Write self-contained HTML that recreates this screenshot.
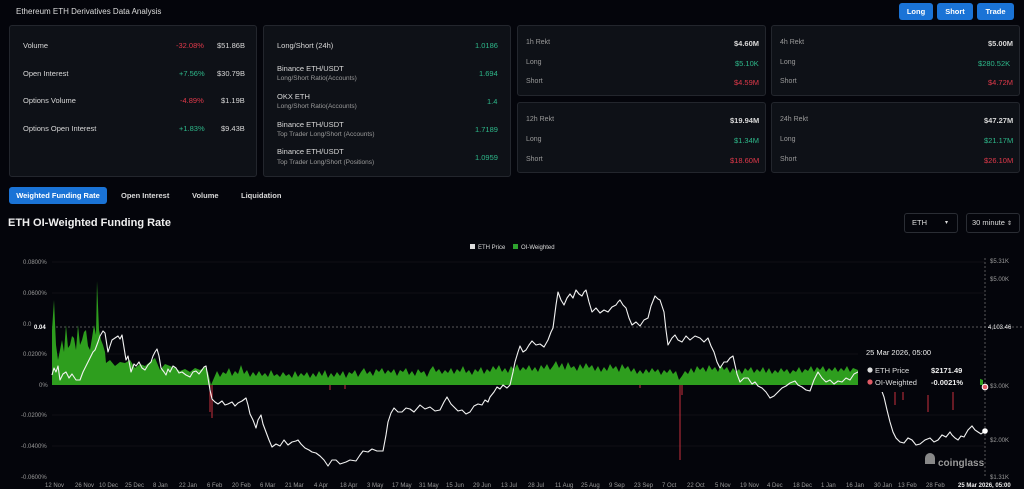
<!DOCTYPE html>
<html><head><meta charset="utf-8">
<style>
*{box-sizing:border-box;margin:0;padding:0}
body{width:1024px;height:489px;background:#04050b;color:#e6e6e6;font-family:"Liberation Sans",sans-serif;overflow:hidden;position:relative}
.a{position:absolute}
.card{position:absolute;background:#0e1117;border:1px solid #23262d;border-radius:3px}
.t{position:absolute;font-size:7.5px;color:#d8d8d8;white-space:nowrap}
.s{font-size:6.5px;color:#9a9a9a}
.g{color:#2eb88a}.r{color:#e0394a}
.b{font-weight:bold}
.btn{position:absolute;top:3px;height:17px;background:#1a73d6;border-radius:3px;color:#fff;font-size:7.5px;font-weight:bold;text-align:center;line-height:17px}
.ax{font-size:6px;fill:#9a9a9a;font-family:"Liberation Sans",sans-serif}
</style></head><body>
<div class="t" style="left:16px;top:7px;font-size:8px;color:#ddd">Ethereum ETH Derivatives Data Analysis</div>
<div class="btn" style="left:899px;width:34px">Long</div>
<div class="btn" style="left:937px;width:36px">Short</div>
<div class="btn" style="left:977px;width:37px">Trade</div>

<div class="card" style="left:9px;top:25px;width:248px;height:152px"></div>
<div class="t" style="left:23px;top:41px">Volume</div><div class="t r" style="left:176px;top:41px">-32.08%</div><div class="t" style="left:217px;top:41px">$51.86B</div>
<div class="t" style="left:23px;top:69px">Open Interest</div><div class="t g" style="left:179px;top:69px">+7.56%</div><div class="t" style="left:217px;top:69px">$30.79B</div>
<div class="t" style="left:23px;top:96px">Options Volume</div><div class="t r" style="left:180px;top:96px">-4.89%</div><div class="t" style="left:221px;top:96px">$1.19B</div>
<div class="t" style="left:23px;top:124px">Options Open Interest</div><div class="t g" style="left:179px;top:124px">+1.83%</div><div class="t" style="left:221px;top:124px">$9.43B</div>

<div class="card" style="left:263px;top:25px;width:248px;height:152px"></div>
<div class="t" style="left:277px;top:41px">Long/Short (24h)</div><div class="t g" style="left:475px;top:41px">1.0186</div>
<div class="t" style="left:277px;top:64px">Binance ETH/USDT</div><div class="t s" style="left:277px;top:75px">Long/Short Ratio(Accounts)</div><div class="t g" style="left:479px;top:69px">1.694</div>
<div class="t" style="left:277px;top:92px">OKX ETH</div><div class="t s" style="left:277px;top:103px">Long/Short Ratio(Accounts)</div><div class="t g" style="left:487px;top:97px">1.4</div>
<div class="t" style="left:277px;top:120px">Binance ETH/USDT</div><div class="t s" style="left:277px;top:131px">Top Trader Long/Short (Accounts)</div><div class="t g" style="left:475px;top:125px">1.7189</div>
<div class="t" style="left:277px;top:147px">Binance ETH/USDT</div><div class="t s" style="left:277px;top:159px">Top Trader Long/Short (Positions)</div><div class="t g" style="left:475px;top:153px">1.0959</div>

<div class="card" style="left:517px;top:25px;width:249px;height:71px"></div>
<div class="t s" style="left:526px;top:39px;font-size:7px">1h Rekt</div><div class="t b" style="left:734px;top:39px">$4.60M</div>
<div class="t s" style="left:526px;top:59px;font-size:7px">Long</div><div class="t g" style="left:735px;top:59px">$5.10K</div>
<div class="t s" style="left:526px;top:78px;font-size:7px">Short</div><div class="t r" style="left:734px;top:78px">$4.59M</div>
<div class="card" style="left:771px;top:25px;width:249px;height:71px"></div>
<div class="t s" style="left:780px;top:39px;font-size:7px">4h Rekt</div><div class="t b" style="left:988px;top:39px">$5.00M</div>
<div class="t s" style="left:780px;top:59px;font-size:7px">Long</div><div class="t g" style="left:978px;top:59px">$280.52K</div>
<div class="t s" style="left:780px;top:78px;font-size:7px">Short</div><div class="t r" style="left:988px;top:78px">$4.72M</div>
<div class="card" style="left:517px;top:102px;width:249px;height:71px"></div>
<div class="t s" style="left:526px;top:116px;font-size:7px">12h Rekt</div><div class="t b" style="left:730px;top:116px">$19.94M</div>
<div class="t s" style="left:526px;top:136px;font-size:7px">Long</div><div class="t g" style="left:734px;top:136px">$1.34M</div>
<div class="t s" style="left:526px;top:156px;font-size:7px">Short</div><div class="t r" style="left:730px;top:156px">$18.60M</div>
<div class="card" style="left:771px;top:102px;width:249px;height:71px"></div>
<div class="t s" style="left:780px;top:116px;font-size:7px">24h Rekt</div><div class="t b" style="left:984px;top:116px">$47.27M</div>
<div class="t s" style="left:780px;top:136px;font-size:7px">Long</div><div class="t g" style="left:984px;top:136px">$21.17M</div>
<div class="t s" style="left:780px;top:156px;font-size:7px">Short</div><div class="t r" style="left:984px;top:156px">$26.10M</div>

<div class="a" style="left:9px;top:187px;width:98px;height:17px;background:#1a73d6;border-radius:3px;color:#fff;font-size:7.5px;font-weight:bold;text-align:center;line-height:17px">Weighted Funding Rate</div>
<div class="t b" style="left:121px;top:191px">Open Interest</div>
<div class="t b" style="left:192px;top:191px">Volume</div>
<div class="t b" style="left:241px;top:191px">Liquidation</div>
<div class="t b" style="left:8px;top:217px;font-size:11px;color:#f0f0f0">ETH OI-Weighted Funding Rate</div>
<div class="a" style="left:904px;top:213px;width:54px;height:20px;border:1px solid #2a2d34;border-radius:3px;font-size:7.5px;color:#ddd;line-height:18px;padding-left:7px">ETH<span style="position:absolute;right:9px;font-size:6px">▾</span></div>
<div class="a" style="left:966px;top:213px;width:54px;height:20px;border:1px solid #2a2d34;border-radius:3px;font-size:7.5px;color:#ddd;line-height:18px;padding-left:5px">30 minute <span style="font-size:6px">⇕</span></div>

<svg class="a" style="left:0;top:240px" width="1024" height="249" viewBox="0 240 1024 249">
<g stroke="#1a1c22" stroke-width="0.6">
<line x1="52" y1="262" x2="985" y2="262"/><line x1="52" y1="293" x2="985" y2="293"/><line x1="52" y1="354" x2="985" y2="354"/><line x1="52" y1="415" x2="985" y2="415"/><line x1="52" y1="446" x2="985" y2="446"/>
</g>
<line x1="52" y1="327" x2="1024" y2="327" stroke="#aaa" stroke-width="0.6" stroke-dasharray="2,2"/>
<line x1="985" y1="258" x2="985" y2="478" stroke="#aaa" stroke-width="0.5" stroke-dasharray="2,2"/>
<text class="ax" x="23" y="264">0.0800%</text><text class="ax" x="23" y="295">0.0600%</text><text class="ax" x="23" y="326">0.0</text><text class="ax" x="23" y="356">0.0200%</text><text class="ax" x="39" y="387">0%</text><text class="ax" x="21" y="417">-0.0200%</text><text class="ax" x="21" y="448">-0.0400%</text><text class="ax" x="21" y="479">-0.0600%</text>
<text x="34" y="329" style="font-size:6px;fill:#fff;font-weight:bold;font-family:'Liberation Sans'">0.04</text>
<text class="ax" x="990" y="263">$5.31K</text><text class="ax" x="990" y="281">$5.00K</text><text x="988" y="329" style="font-size:6px;fill:#eee;font-family:'Liberation Sans'">4,103.46</text><text class="ax" x="990" y="388">$3.00K</text><text class="ax" x="990" y="442">$2.00K</text><text class="ax" x="990" y="479">$1.31K</text>
<rect x="470" y="244" width="5" height="5" fill="#ddd"/><text class="ax" x="478" y="249" style="fill:#ddd">ETH Price</text>
<rect x="513" y="244" width="5" height="5" fill="#2ea32e"/><text class="ax" x="521" y="249" style="fill:#ddd">OI-Weighted</text>
<path fill="#2e9e1e" d="M52,385 L52,330 54,300 56,345 58,360 60,350 62,340 64,352 66,325 68,348 70,345 72,336 74,338 76,350 78,325 80,345 82,340 84,332 86,330 88,346 90,350 92,338 94,325 96,335 97,281 99,330 101,340 103,345 105,352 106,363 110,360 115,366 120,362 125,363 130,360 135,368 140,364 145,366 150,362 155,358 160,370 165,364 170,366 175,368 180,371 185,369 190,372 195,368 200,370 205,367 208,372 211,385 214,378 217,371 220,377 223,372 226,374 229,368 232,376 235,371 238,374 241,365 244,374 247,370 250,377 253,372 256,376 259,371 262,376 265,373 268,377 271,370 274,376 277,374 280,377 283,372 286,376 289,374 292,378 295,371 298,377 301,373 304,376 307,372 310,378 313,373 316,377 319,371 322,376 325,370 328,378 331,373 334,377 337,372 340,376 343,371 346,378 349,372 352,374 355,370 358,377 361,372 364,368 367,374 370,371 373,376 376,369 379,372 382,368 385,374 388,370 391,373 394,369 397,376 400,370 403,372 406,368 409,375 412,371 415,376 418,369 421,373 424,371 427,377 430,370 433,366 436,372 439,369 442,374 445,370 448,373 451,368 454,374 457,369 460,372 463,366 466,373 469,370 472,375 475,369 478,372 481,367 484,374 487,369 490,372 493,366 496,370 499,365 502,372 505,368 508,373 511,366 514,370 517,364 520,371 523,367 526,370 529,365 532,371 535,367 538,372 541,365 544,369 547,364 550,370 553,366 556,361 559,368 562,363 565,370 568,362 571,368 574,366 577,371 580,364 583,369 586,363 589,368 592,365 595,371 598,366 601,372 604,367 607,371 610,364 613,369 616,366 619,372 622,364 625,369 628,366 631,372 634,368 637,374 640,370 643,374 646,369 649,373 652,368 655,372 658,369 661,375 664,370 667,373 670,369 673,374 676,371 679,380 682,376 685,371 688,374 691,368 694,373 697,366 700,370 703,367 706,372 709,365 712,370 715,367 718,372 721,365 724,370 727,367 730,373 733,368 736,372 739,369 742,374 745,368 748,371 751,367 754,373 757,369 760,372 763,367 766,373 769,368 772,374 775,370 778,373 781,368 784,372 787,369 790,374 793,370 796,372 799,367 802,373 805,369 808,371 811,366 814,372 817,367 820,370 823,366 826,372 829,368 832,371 835,367 838,372 841,368 844,371 847,366 850,372 853,368 858,370 858,385 Z"/>
<path fill="#2e9e1e" d="M955,385 L955,378 958,381 962,377 966,380 970,377 974,381 978,378 983,380 983,385Z"/>
<g stroke="#c8303c" stroke-width="1" fill="none">
<path d="M210,385 V412 M212,385 V418 M680,385 V460 M682,385 V395 M330,385 V390 M345,385 V389 M640,385 V388 M895,392 V405 M903,390 V400 M928,395 V412 M953,392 V410"/>
</g>
<polyline fill="none" stroke="#f2f2f2" stroke-width="1.1" stroke-linejoin="round" points="52,375 54,368 56,372 58,366 60,380 63,374 66,372 69,378 72,374 76,380 80,380 83,372 85,368 88,362 90,358 93,352 95,350 98,342 100,336 103,331 105,333 108,352 110,346 112,340 115,338 118,336 120,339 122,335 126,360 128,356 131,372 134,364 136,366 139,362 142,368 145,370 148,365 151,362 153,356 155,352 157,349 159,356 161,368 164,372 166,375 168,369 170,372 173,366 176,368 179,373 182,372 186,375 190,377 193,372 196,371 199,374 202,370 204,367 206,366 208,378 210,390 212,399 215,402 218,404 222,401 225,405 228,404 232,402 235,406 238,403 242,401 246,398 248,405 250,414 253,420 256,428 258,420 261,415 263,424 266,432 269,440 272,447 276,444 280,446 284,440 288,445 292,442 296,441 298,440 301,444 305,448 309,450 312,452 316,453 320,456 324,460 328,466 332,460 336,460 340,464 346,462 350,460 356,461 360,455 363,451 368,452 372,449 377,451 383,451 386,435 388,422 391,413 394,408 398,412 402,412 406,408 410,409 414,412 420,405 425,409 430,407 435,411 440,410 444,402 447,397 451,404 455,408 458,411 462,410 466,414 470,412 474,406 478,404 482,405 485,400 488,402 490,397 494,392 497,387 500,389 503,385 507,388 510,385 513,372 515,362 518,352 520,346 523,352 526,350 529,345 532,341 536,345 540,344 544,347 548,340 551,332 553,328 556,305 558,292 561,300 564,305 567,298 570,294 573,298 576,290 579,294 582,296 584,292 586,290 589,302 592,312 596,308 600,313 604,310 608,312 612,307 616,305 618,302 620,300 623,305 626,308 629,318 632,325 636,322 640,326 644,320 648,318 651,306 655,296 658,299 660,300 662,306 664,312 666,330 668,345 672,338 675,335 678,340 682,342 686,336 690,340 695,336 700,338 704,342 708,338 711,346 714,352 717,362 720,368 724,362 727,362 730,358 733,356 737,374 740,382 744,378 748,378 752,384 755,382 758,386 762,388 766,392 770,398 774,396 778,392 782,388 786,386 790,383 795,381 798,385 802,387 806,390 810,391 814,380 818,372 822,378 826,382 830,380 834,384 838,381 842,382 846,378 850,380 854,374 858,372 861,368 863,370"/>
<polyline fill="none" stroke="#f2f2f2" stroke-width="1.1" points="876,378 880,386 884,397 887,410 890,422 893,432 896,438 900,442 904,443 908,438 912,440 916,445 920,444 925,440 930,438 934,442 938,440 942,435 946,437 950,432 952,435 955,438 958,440 961,436 964,437 968,430 972,426 975,430 978,432 981,434 985,431"/>
<rect x="858" y="340" width="122" height="52" fill="#04050b"/>
<text x="866" y="355" style="font-size:7.5px;fill:#eee;font-family:'Liberation Sans'">25 Mar 2026, 05:00</text>
<circle cx="870" cy="370" r="2.6" fill="#ddd"/><text x="875" y="373" style="font-size:7.5px;fill:#ddd;font-family:'Liberation Sans'">ETH Price</text><text x="931" y="373" style="font-size:7.5px;fill:#eee;font-weight:bold;font-family:'Liberation Sans'">$2171.49</text>
<circle cx="870" cy="382" r="2.6" fill="#e05a64"/><text x="875" y="385" style="font-size:7.5px;fill:#ddd;font-family:'Liberation Sans'">OI-Weighted</text><text x="931" y="385" style="font-size:7.5px;fill:#eee;font-weight:bold;font-family:'Liberation Sans'">-0.0021%</text>
<circle cx="985" cy="387" r="2.8" fill="#e05a64" stroke="#fff" stroke-width="1"/>
<circle cx="985" cy="431" r="2.8" fill="#fff"/>
<path d="M925,458 a5,5 0 0 1 10,0 v6 h-10 z" fill="#888"/>
<text x="938" y="466" style="font-size:10px;fill:#999;font-weight:bold;font-family:'Liberation Sans'">coinglass</text>
<g class="ax" style="font-size:6px">
<text x="45" y="487">12 Nov</text><text x="75" y="487">26 Nov</text><text x="99" y="487">10 Dec</text><text x="125" y="487">25 Dec</text><text x="153" y="487">8 Jan</text><text x="179" y="487">22 Jan</text><text x="207" y="487">6 Feb</text><text x="232" y="487">20 Feb</text><text x="260" y="487">6 Mar</text><text x="285" y="487">21 Mar</text><text x="314" y="487">4 Apr</text><text x="340" y="487">18 Apr</text><text x="367" y="487">3 May</text><text x="392" y="487">17 May</text><text x="419" y="487">31 May</text><text x="446" y="487">15 Jun</text><text x="473" y="487">29 Jun</text><text x="501" y="487">13 Jul</text><text x="528" y="487">28 Jul</text><text x="555" y="487">11 Aug</text><text x="581" y="487">25 Aug</text><text x="609" y="487">9 Sep</text><text x="634" y="487">23 Sep</text><text x="662" y="487">7 Oct</text><text x="687" y="487">22 Oct</text><text x="715" y="487">5 Nov</text><text x="740" y="487">19 Nov</text><text x="767" y="487">4 Dec</text><text x="793" y="487">18 Dec</text><text x="821" y="487">1 Jan</text><text x="846" y="487">16 Jan</text><text x="874" y="487">30 Jan</text><text x="898" y="487">13 Feb</text><text x="926" y="487">28 Feb</text><text x="958" y="487" style="fill:#eee;font-weight:bold">25 Mar 2026, 05:00</text>
</g>
</svg>
</body></html>
